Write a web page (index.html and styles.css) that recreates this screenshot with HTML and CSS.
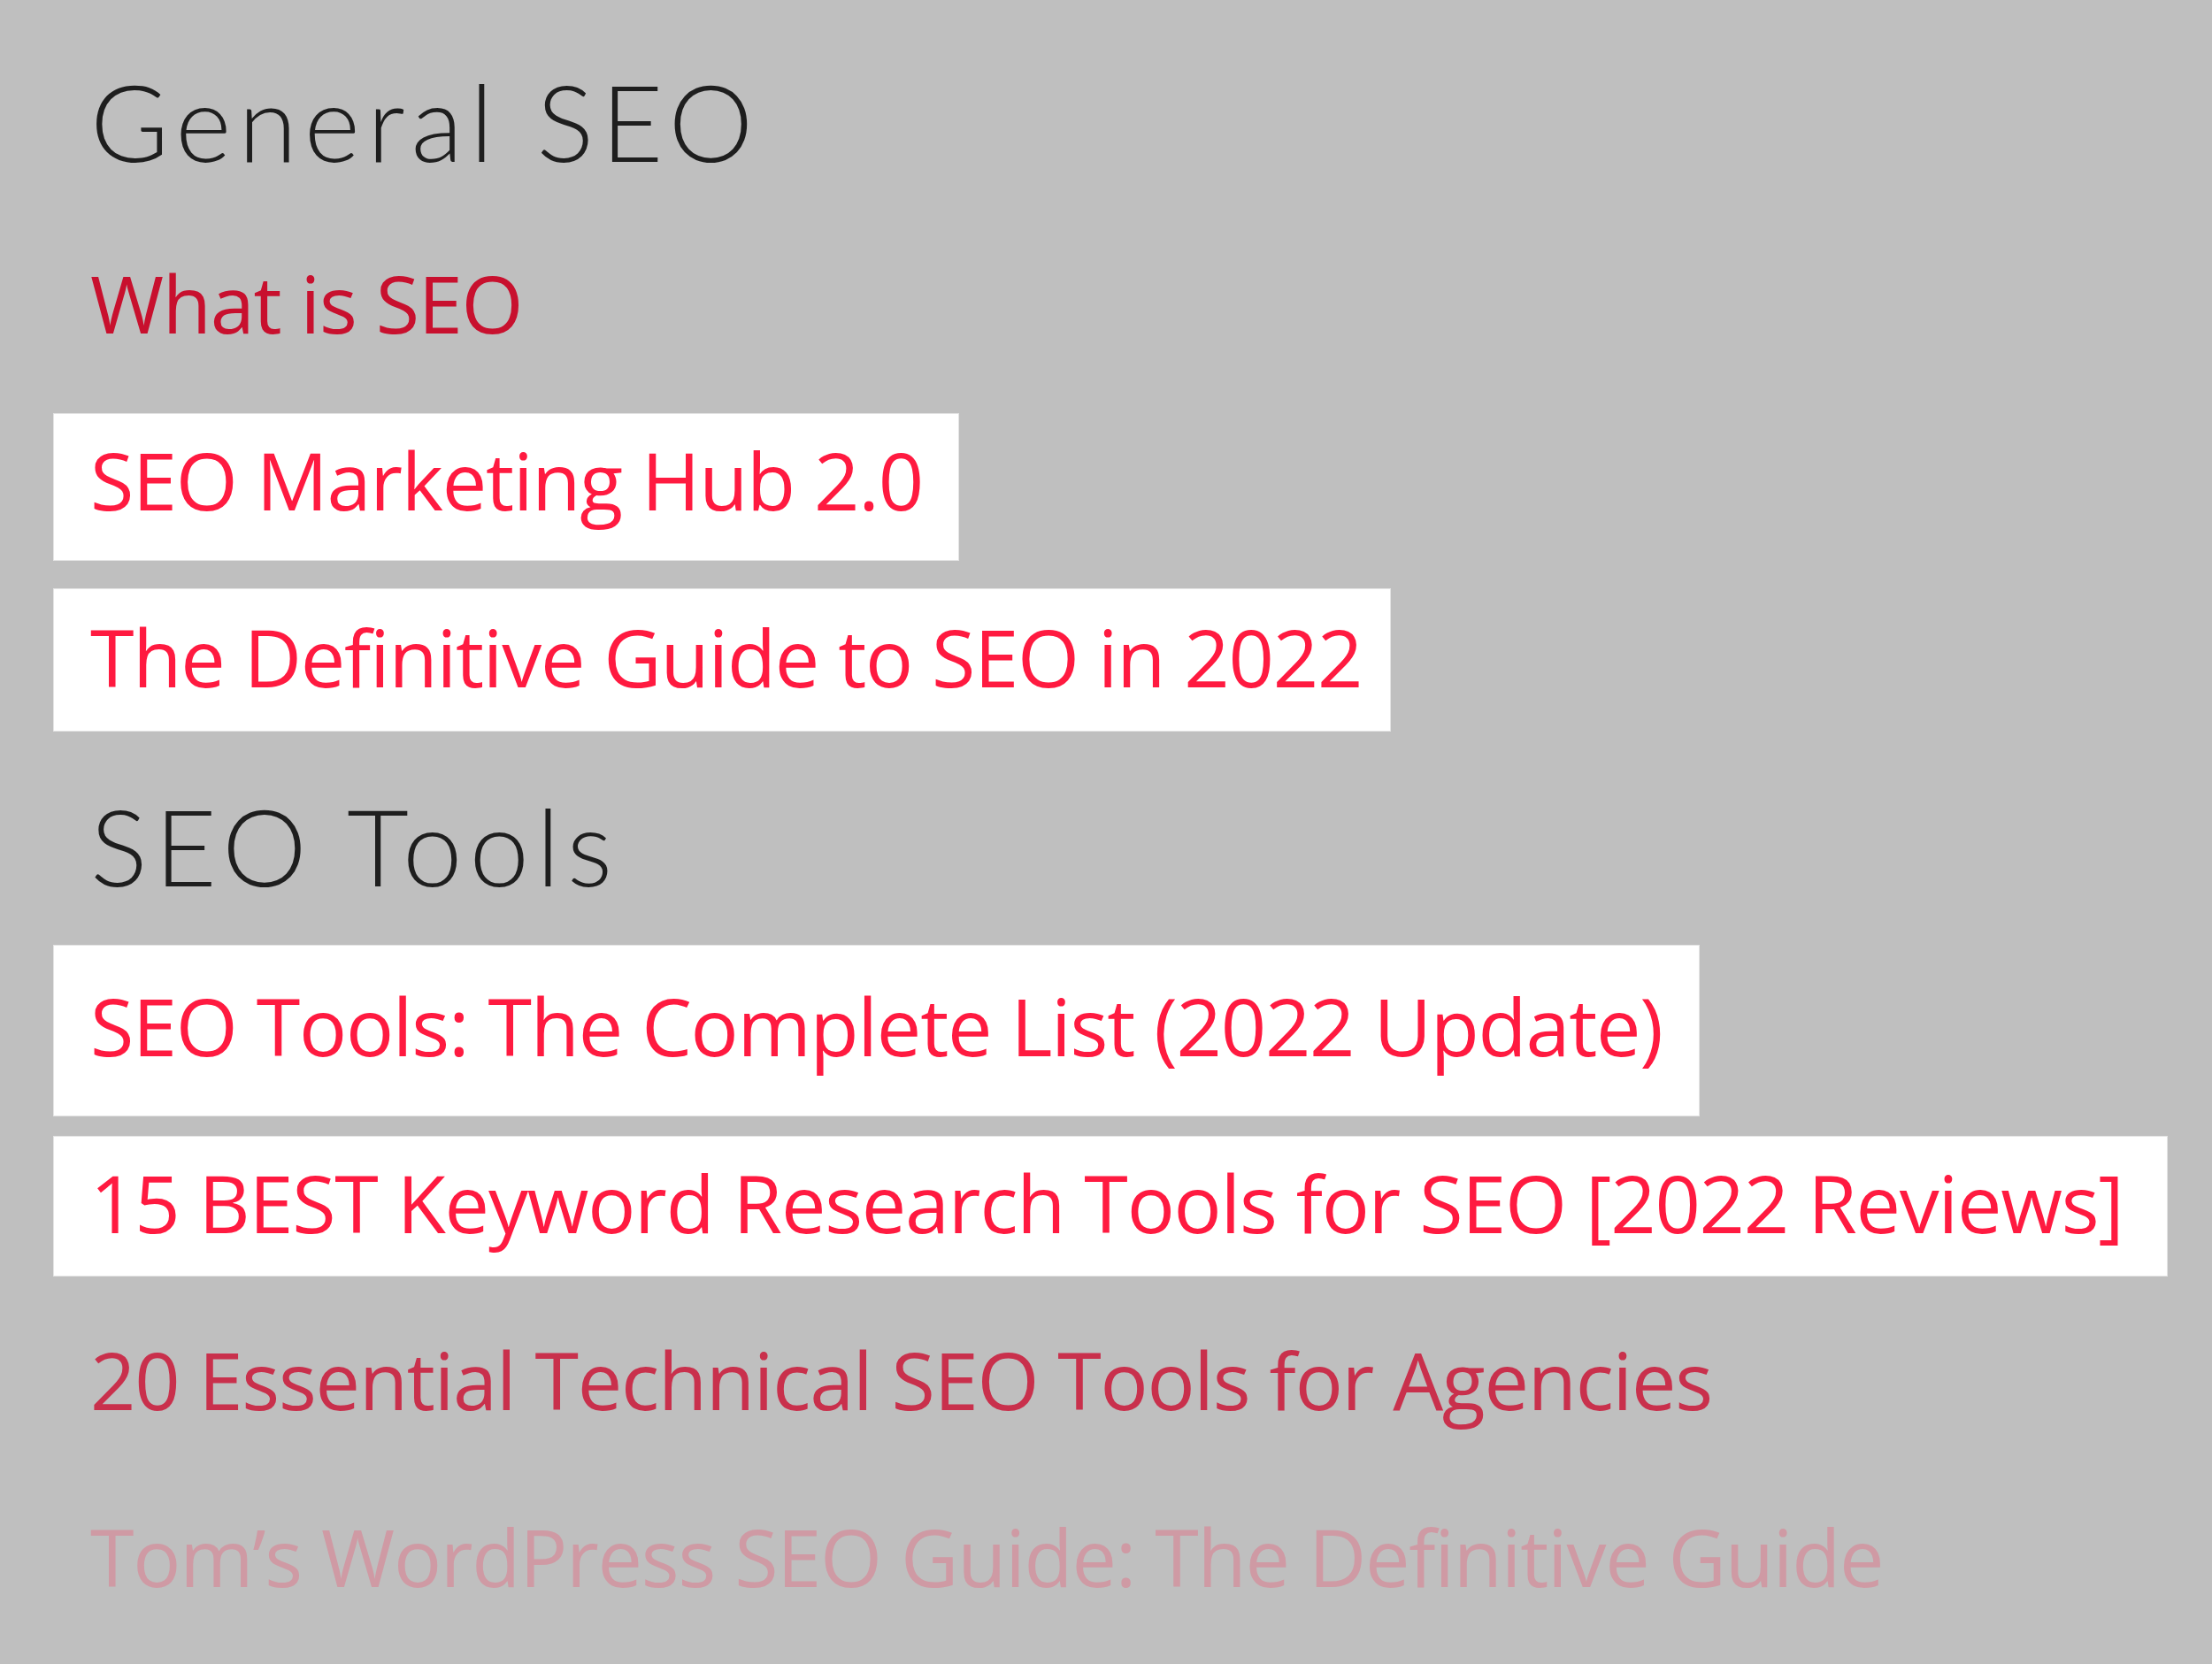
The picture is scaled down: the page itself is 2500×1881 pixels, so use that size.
FILE: index.html
```html
<!DOCTYPE html>
<html lang="en">
<head>
<meta charset="utf-8">
<title>SEO reading list</title>
<link rel="stylesheet" href="styles.css">
</head>
<body>
<main class="reading-list">
  <section class="group">
    <h2 class="group-title group-title--first">General SEO</h2>
    <ul class="links">
      <li class="links-item"><a class="link link--visited" href="#">What is SEO</a></li>
      <li class="links-item"><a class="link link--marked mark-a" href="#">SEO Marketing Hub 2.0</a></li>
      <li class="links-item"><a class="link link--marked mark-b" href="#">The Definitive Guide to SEO in 2022</a></li>
    </ul>
  </section>
  <section class="group">
    <h2 class="group-title group-title--next">SEO Tools</h2>
    <ul class="links">
      <li class="links-item"><a class="link link--marked mark-c" href="#">SEO Tools: The Complete List (2022 Update)</a></li>
      <li class="links-item"><a class="link link--marked mark-d" href="#">15 BEST Keyword Research Tools for SEO [2022 Reviews]</a></li>
      <li class="links-item"><a class="link link--faded" href="#">20 Essential Technical SEO Tools for Agencies</a></li>
      <li class="links-item"><a class="link link--ghost" href="#">Tom’s WordPress SEO Guide: The Definitive Guide</a></li>
    </ul>
  </section>
</main>
</body>
</html>
```
FILE: styles.css
```css
html, body {
  margin: 0;
  padding: 0;
}

body {
  background: #bfbfbf;
  width: 2500px;
  height: 1881px;
  overflow: hidden;
}

.reading-list {
  padding-left: 61px;
}

/* section headings */
.group-title {
  margin: 0;
  padding-left: 41px;
  font-family: "Lato", "Liberation Sans", sans-serif;
  font-weight: 300;
  font-size: 121px;
  line-height: 120px;
  letter-spacing: 8px;
  color: #1e1e1e;
}

.group-title--first {
  padding-top: 77px;
  margin-bottom: 45px;
}

.group-title--next {
  padding-top: 54px;
  margin-bottom: 43px;
}

/* link rows: fixed 200px pitch, highlight boxes paint outside the line box */
.links {
  list-style: none;
  margin: 0;
  padding: 0;
}

.links-item {
  height: 200px;
  font-family: "Open Sans", "Liberation Sans", sans-serif;
  font-size: 90px;
  line-height: 200px;
  letter-spacing: -1.25px;
  white-space: nowrap;
}

.link {
  text-decoration: none;
  padding: 0 40px 0 41px;
}

.link--visited { color: #c8102e; }
.link--faded   { color: #c9304c; }
.link--ghost   { color: #cf9aa4; }

.link--marked {
  color: #ff1a40;
  background: #ffffff;
  box-shadow: 0 0 0 1px #e4e4e4;
}

.mark-a { padding-top: 13px; padding-bottom: 30px; padding-right: 40px; }
.mark-b { padding-top: 15px; padding-bottom: 23px; padding-right: 32px; }
.mark-c { padding-top: 29px; padding-bottom: 41px; padding-right: 41px; }
.mark-d { padding-top: 13px; padding-bottom: 22px; padding-right: 49px; }
```
